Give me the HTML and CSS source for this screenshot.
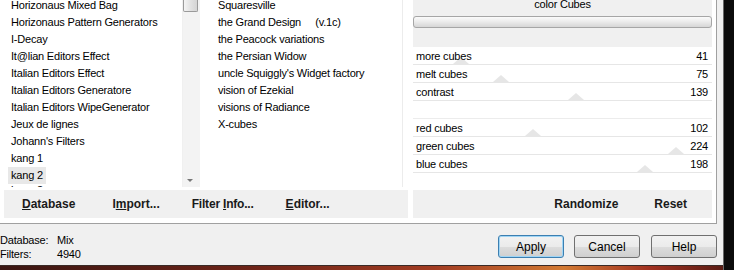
FILE: index.html
```html
<!DOCTYPE html>
<html lang="en">
<head>
    <meta charset="UTF-8">
    <title>Filters Unlimited - color Cubes</title>
    <link rel="stylesheet" href="styles.css">
</head>
<body>

    <div class="screen">
        <div class="window">
            <div class="client">
                <div class="panes">
                    <!-- filter categories -->
                    <div class="list-box categories">
                        <ul class="list">
                            <li>Horizonaus Mixed Bag</li>
                            <li>Horizonaus Pattern Generators</li>
                            <li>I-Decay</li>
                            <li>It@lian Editors Effect</li>
                            <li>Italian Editors Effect</li>
                            <li>Italian Editors Generatore</li>
                            <li>Italian Editors WipeGenerator</li>
                            <li>Jeux de lignes</li>
                            <li>Johann's Filters</li>
                            <li>kang 1</li>
                            <li><span class="selected">kang 2</span></li>
                            <li>kang 3</li>
                        </ul>
                        <div class="scrollbar">
                            <div class="thumb"></div>
                            <div class="track"></div>
                            <div class="arrow-down"></div>
                        </div>
                    </div>

                    <!-- filters in category -->
                    <div class="list-box effects">
                        <ul class="list">
                            <li>Squaresville</li>
                            <li>the Grand Design&nbsp;&nbsp;&nbsp;&nbsp;&nbsp;(v.1c)</li>
                            <li>the Peacock variations</li>
                            <li>the Persian Widow</li>
                            <li>uncle Squiggly's Widget factory</li>
                            <li>vision of Ezekial</li>
                            <li>visions of Radiance</li>
                            <li>X-cubes</li>
                        </ul>
                    </div>

                    <!-- parameters -->
                    <div class="params">
                        <div class="params-head">
                            <div class="params-title">color Cubes</div>
                            <div class="preset-bar"></div>
                        </div>
                        <div class="param-group">
                            <div class="param"><span>more cubes</span><span>41</span><i class="knob" style="left: 16.1%"></i></div>
                            <div class="param"><span>melt cubes</span><span>75</span><i class="knob" style="left: 29.4%"></i></div>
                            <div class="param"><span>contrast</span><span>139</span><i class="knob" style="left: 54.5%"></i></div>
                        </div>
                        <div class="param-group second">
                            <div class="param"><span>red cubes</span><span>102</span><i class="knob" style="left: 40%"></i></div>
                            <div class="param"><span>green cubes</span><span>224</span><i class="knob" style="left: 87.8%"></i></div>
                            <div class="param"><span>blue cubes</span><span>198</span><i class="knob" style="left: 77.6%"></i></div>
                        </div>
                    </div>
                </div>

                <div class="actions">
                    <div class="action-bar tools">
                        <span class="tool-database"><u>D</u>atabase</span>
                        <span class="tool-import">I<u>m</u>port...</span>
                        <span class="tool-info">Filter <u>I</u>nfo...</span>
                        <span><u>E</u>ditor...</span>
                    </div>
                    <div class="action-bar random">
                        <span>Randomize</span>
                        <span>Reset</span>
                    </div>
                </div>
            </div>

            <div class="footer">
                <div class="status">
                    <div class="status-line"><span class="status-label">Database:</span>Mix</div>
                    <div class="status-line"><span class="status-label">Filters:</span>4940</div>
                </div>
                <div class="dialog-buttons">
                    <button class="dlg-button default">Apply</button>
                    <button class="dlg-button">Cancel</button>
                    <button class="dlg-button">Help</button>
                </div>
            </div>
            <div class="desktop"></div>
        </div>
        <div class="edge"></div>
    </div>

</body>
</html>
```

FILE: styles.css
```css
body {
    margin: 0;
    font-family: "Liberation Sans", Arial, sans-serif;
    font-size: 11px;
    letter-spacing: -0.2px;
    color: #000;
    background-color: #0c0c0c;
}

.screen {
    display: flex;
    width: 734px;
    height: 270px;
    overflow: hidden;
}

.window {
    width: 723px;
    display: flex;
    flex-direction: column;
    background-color: #f0f0f0;
}

.edge {
    flex: 1;
    background-color: #0c0c0c;
    border-left: 1px solid #6a6a6a;
}

/* white client area with the lists */
.client {
    width: 716px;
    height: 223px;
    background-color: #fff;
    border-right: 1px solid #a0a0a0;
    border-bottom: 1px solid #a0a0a0;
    display: flex;
    flex-direction: column;
}

.panes {
    display: flex;
    height: 187px;
    overflow: hidden;
}

.list-box {
    display: flex;
    overflow: hidden;
}

.categories {
    width: 200px;
}

.effects {
    width: 194px;
    margin-left: 8px;
    border-right: 1px solid #ececec;
}

.list {
    list-style: none;
    margin: -3px 0 0 0;
    padding: 0;
    flex: 1;
}

.list li {
    height: 17px;
    line-height: 17px;
    white-space: nowrap;
}

.categories .list li {
    padding-left: 11px;
}

.categories .list li:last-child {
    margin-top: -2px;
}

.effects .list li {
    padding-left: 10px;
}

.selected {
    background-color: #e8e8e8;
    padding: 0 3px;
    margin-left: -3px;
    display: inline-block;
}

.scrollbar {
    width: 17px;
    display: flex;
    flex-direction: column;
    background-color: #f3f3f3;
    border-left: 1px solid #f0f0f0;
}

.thumb {
    height: 11px;
    width: 13px;
    border: 1px solid #9a9a9a;
    border-top: none;
    border-radius: 0 0 2px 2px;
    background: linear-gradient(90deg, #f4f4f4, #e2e2e2 50%, #d4d4d4);
}

.track {
    flex: 1;
}

.arrow-down {
    width: 0;
    height: 0;
    margin: 0 0 5px 4px;
    border-left: 3px solid transparent;
    border-right: 3px solid transparent;
    border-top: 3px solid #777;
}

/* parameter panel */
.params {
    width: 299px;
    margin-left: 10px;
}

.params-head {
    display: flow-root;
    height: 47px;
    background-color: #f0f0f0;
}

.params-title {
    margin-top: -3px;
    height: 15px;
    line-height: 15px;
    text-align: center;
}

.preset-bar {
    margin-top: 4px;
    height: 10px;
    border: 1px solid #a6a6a6;
    border-radius: 3px;
    background: linear-gradient(#fbfbfb, #ececec 45%, #d6d6d6);
}

.param-group.second {
    margin-top: 17px;
    border-top: 1px solid #ececec;
}

.param {
    position: relative;
    display: flex;
    justify-content: space-between;
    height: 16px;
    line-height: 17px;
    padding: 1px 4px 0 3px;
    border-bottom: 1px solid #e6e6e6;
}

.param span {
    position: relative;
    z-index: 1;
}

.knob {
    position: absolute;
    bottom: 0;
    width: 0;
    height: 0;
    margin-left: -8px;
    border-left: 8px solid transparent;
    border-right: 8px solid transparent;
    border-bottom: 7px solid #e6e6e6;
}

/* button bars inside client */
.actions {
    display: flex;
    margin-top: 3px;
}

.action-bar {
    height: 28px;
    display: flex;
    align-items: center;
    background-color: #f0f0f0;
    font-size: 12px;
    font-weight: bold;
    letter-spacing: 0;
    color: #1a1a1a;
}

.tools {
    width: 386px;
    margin-left: 4px;
    padding-left: 18px;
}

.tool-database {
    margin-right: 37px;
}

.tool-import {
    margin-right: 32px;
}

.tool-info {
    margin-right: 32px;
    letter-spacing: -0.2px;
}

.random {
    width: 274px;
    margin-left: 5px;
    padding-right: 25px;
    justify-content: flex-end;
    gap: 36px;
}

/* footer */
.footer {
    height: 41px;
    display: flex;
    justify-content: space-between;
}

.status {
    padding-top: 9px;
}

.status-line {
    height: 14px;
    line-height: 14px;
}

.status-label {
    display: inline-block;
    width: 57px;
}

.dialog-buttons {
    display: flex;
    gap: 10px;
    padding-top: 11px;
    padding-right: 6px;
}

.dlg-button {
    width: 66px;
    height: 23px;
    padding: 0;
    border: 1px solid #707070;
    border-radius: 3px;
    background: linear-gradient(#f2f2f2, #ebebeb 50%, #dddddd 51%, #cfcfcf);
    font-family: "Liberation Sans", Arial, sans-serif;
    font-size: 12px;
    color: #000;
}

.dlg-button.default {
    border-color: #3c7fb1;
    box-shadow: inset 0 0 0 1px #9fd5f5;
}

.dlg-button + .dlg-button + .dlg-button {
    margin-left: 1px;
}

.desktop {
    flex: 1;
    border-top: 1px solid #3a2a26;
    background: linear-gradient(90deg, #3a1612, #6e2418 35%, #a23c22 60%, #d27a34 78%, #a03020 90%, #5a1c14);
}
```
